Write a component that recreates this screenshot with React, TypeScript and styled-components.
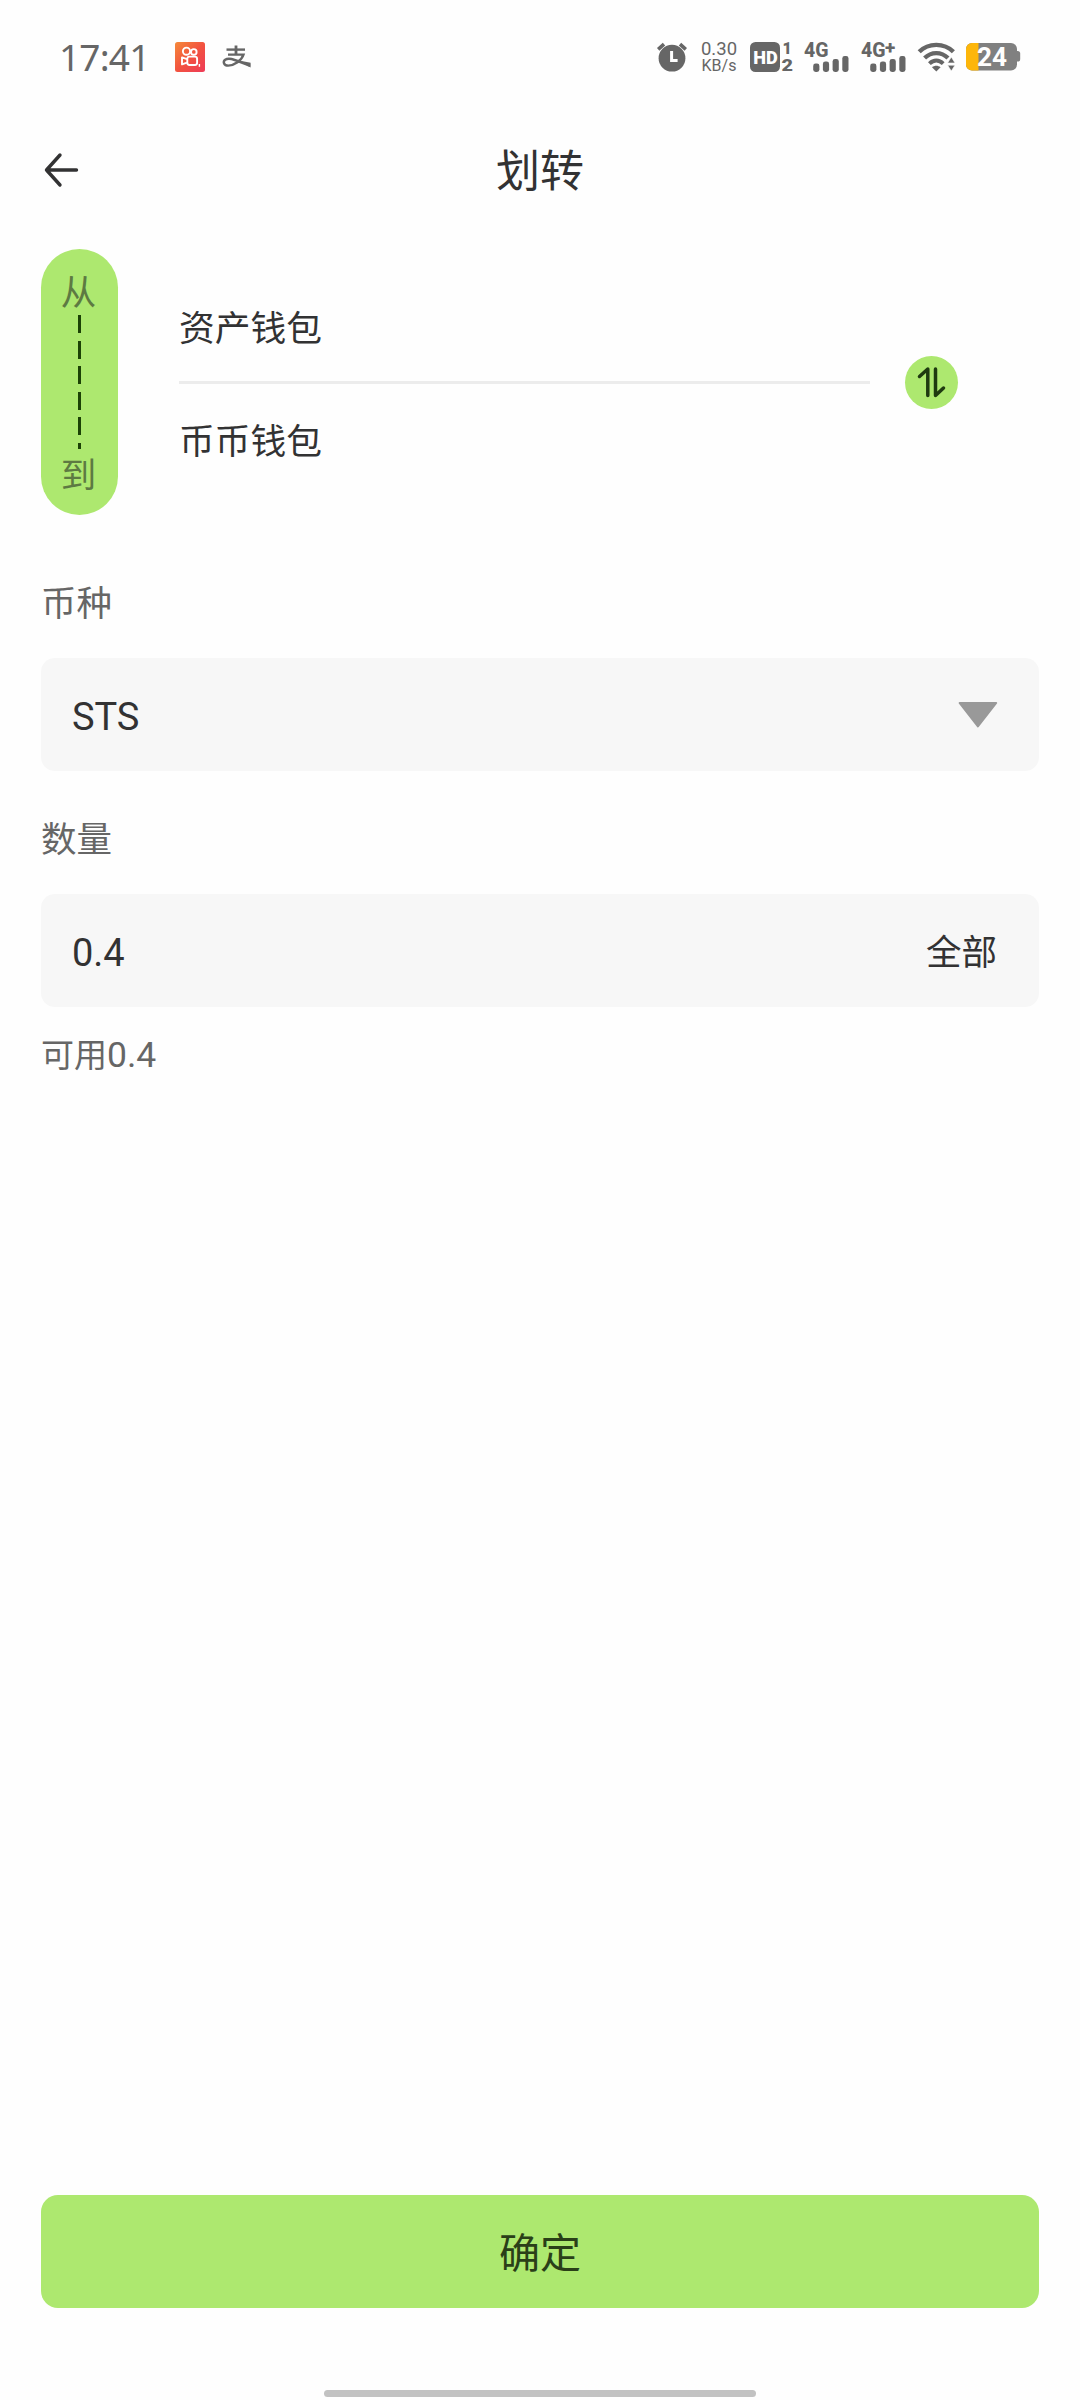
import React from 'react';
import styled, { createGlobalStyle } from 'styled-components';

const GREEN = '#ade86f';
const INK = '#323233';
const GREY = '#666666';
const STATUS = '#666666';

const GlobalStyle = createGlobalStyle`
  * { box-sizing: border-box; }
  body { margin: 0; background: #fefefe; }
  button { border: 0; padding: 0; background: none; font: inherit; color: inherit; }
`;

const Screen = styled.div`
  width: 1080px;
  height: 2400px;
  display: flex;
  flex-direction: column;
  background: #fefefe;
  color: ${INK};
  font-family: Roboto, 'Noto Sans CJK SC', sans-serif;
  overflow: hidden;
`;

const StatusBar = styled.div`
  height: 114px;
  flex: none;
  display: flex;
  justify-content: space-between;
  align-items: center;
  padding: 0 59px;
  color: ${STATUS};
`;

const StatusGroup = styled.div`
  display: flex;
  align-items: center;
`;

const Clock = styled.span`
  width: 116px;
  font: 400 37px/50px 'Noto Sans', sans-serif;
  letter-spacing: -0.8px;
`;

const Glyph = styled.svg<{ $ml?: number }>`
  display: block;
  flex: none;
  overflow: visible;
  margin-left: ${(p) => p.$ml ?? 0}px;
`;

const Speed = styled.div`
  width: 40px;
  margin-left: 12px;
  display: flex;
  flex-direction: column;
  align-items: center;
  font-family: Roboto, sans-serif;
`;

const SpeedLine = styled.span<{ $size: number; $lh: number }>`
  font-size: ${(p) => p.$size}px;
  line-height: ${(p) => p.$lh}px;
`;

const Header = styled.header`
  height: 114px;
  flex: none;
  display: grid;
  grid-template-columns: 140px 1fr 140px;
  align-items: center;
`;

const Back = styled.button`
  padding: 0 0 0 42px;
  height: 40px;
  display: flex;
  align-items: flex-start;
`;

const Title = styled.h1`
  margin: 0;
  padding-top: 2px;
  font-size: 44px;
  font-weight: 400;
  line-height: 60px;
  text-align: center;
`;

const Transfer = styled.section`
  flex: none;
  height: 266px;
  margin: 21px 41px 0;
  display: flex;
  align-items: center;
`;

const Pill = styled.div`
  width: 77px;
  height: 266px;
  border-radius: 39px;
  background: ${GREEN};
  color: #5d7a42;
  display: flex;
  flex-direction: column;
  align-items: center;
  padding: 22px 2px 0 0;
  font-size: 35.5px;
  line-height: 44px;
`;

const Dashes = styled.div`
  width: 3px;
  height: 134px;
  margin: 0 0 5px 2px;
  background: repeating-linear-gradient(to bottom, #1c4206 0 18px, transparent 18px 25.6px);
`;

const Wallets = styled.div`
  width: 691px;
  margin-left: 61px;
  padding-top: 1px;
`;

const Wallet = styled.div<{ $first?: boolean }>`
  height: ${(p) => (p.$first ? 113 : 110)}px;
  padding-bottom: 2px;
  display: flex;
  align-items: center;
  font-size: 35.75px;
  border-bottom: ${(p) => (p.$first ? '3px solid #ececec' : '0')};
`;

const Swap = styled.button`
  width: 53px;
  height: 53px;
  margin-left: 35px;
  border-radius: 50%;
  background: ${GREEN};
`;

const Form = styled.section`
  flex: 1;
  margin: 0 41px;
`;

const Label = styled.div<{ $top: number }>`
  margin-top: ${(p) => p.$top}px;
  height: 50px;
  line-height: 50px;
  font-size: 35.5px;
  color: ${GREY};
`;

const Field = styled.div<{ $top: number }>`
  margin-top: ${(p) => p.$top}px;
  height: 113px;
  padding: 0 41px 0 31px;
  border-radius: 14px;
  background: #f7f7f7;
  display: flex;
  align-items: center;
  justify-content: space-between;
  font-size: 38px;
`;

const Value = styled.span`
  padding-top: 5px;
  letter-spacing: -0.1px;
`;

const All = styled.button`
  padding: 0 1px 3px 0;
  font-size: 35.5px;
`;

const Hint = styled.div`
  margin-top: 23px;
  line-height: 50px;
  font-size: 33px;
  color: ${GREY};
`;

const Amount = styled.span`
  font-size: 35.5px;
`;

const Confirm = styled.button`
  flex: none;
  height: 113px;
  margin: 0 41px;
  padding-bottom: 3px;
  border-radius: 17px;
  background: ${GREEN};
  color: #2a3f18;
  font-size: 41px;
`;

const HomeArea = styled.footer`
  height: 92px;
  flex: none;
  display: flex;
  justify-content: center;
  align-items: flex-end;
  padding-bottom: 3px;
`;

const HomeBar = styled.div`
  width: 432px;
  height: 7px;
  border-radius: 4px;
  background: #c2c2c2;
`;

const Kuaishou = () => (
  <Glyph width="30" height="30" viewBox="0 0 30 30">
    <defs>
      <linearGradient id="ks" x1="0" y1="0" x2="1" y2="1">
        <stop offset="0" stopColor="#f58a3a" />
        <stop offset="0.5" stopColor="#f2533f" />
        <stop offset="1" stopColor="#ee3b58" />
      </linearGradient>
    </defs>
    <rect width="30" height="30" rx="2.5" fill="url(#ks)" />
    <g fill="none" stroke="#fff" strokeWidth="1.9">
      <circle cx="11.5" cy="9.2" r="3.6" />
      <circle cx="18.8" cy="9.9" r="2.8" />
      <rect x="12.3" y="14.6" width="9.8" height="8.4" rx="2.2" />
      <path d="M12 17.2 L7 15.4 V22.4 L12 20.6" strokeLinejoin="round" />
    </g>
    <path d="M24.4 22 v2.8" stroke="#fff" strokeWidth="1.4" />
  </Glyph>
);

const Alipay = () => (
  <Glyph $ml={17} width="30" height="24" viewBox="0 0 30 24" fill="none" stroke={STATUS}>
    <path d="M4.5 4.6 H23" strokeWidth="2.4" />
    <path d="M14 0.5 V9.5" strokeWidth="2.8" />
    <path d="M6 9.6 H21.5 C19.5 15.5 12.5 20.6 6.2 20.6 C1.8 20.6 0.6 16.8 3.2 14.8 C7.5 11.6 14 15.6 28 20.8" strokeWidth="2.4" />
    <path d="M17 15.4 L28.6 17.8 V22.6 Z" fill={STATUS} stroke="none" />
  </Glyph>
);

const Alarm = () => (
  <Glyph width="30" height="30" viewBox="0 0 30 30">
    <circle cx="15" cy="16.2" r="13.4" fill={STATUS} />
    <path d="M1.2 7.4 L7 2.2 M28.8 7.4 L23 2.2" stroke={STATUS} strokeWidth="3.6" />
    <path d="M14.6 9 V18.6 H20.6" fill="none" stroke="#fff" strokeWidth="3" />
  </Glyph>
);

const HdBadge = () => (
  <Glyph $ml={11} width="44" height="30" viewBox="0 0 44 30" fontFamily="Roboto, sans-serif" fontWeight="900">
    <rect width="30" height="30" rx="5.5" fill={STATUS} />
    <text x="3.2" y="21.8" fontSize="19" textLength="24.5" lengthAdjust="spacingAndGlyphs" fill="#fff">HD</text>
    <text x="32.5" y="11.6" fontSize="16" fontWeight="900" fill={STATUS}>1</text>
    <text x="31.4" y="29.4" fontSize="17" textLength="11.5" lengthAdjust="spacingAndGlyphs" fill={STATUS}>2</text>
  </Glyph>
);

const BARS = [8.5, 10.5, 13, 16];

const Signal = ({ ml, plus }: { ml: number; plus?: boolean }) => (
  <Glyph $ml={ml} width="45" height="30" viewBox="0 0 45 30" fill={STATUS} fontFamily="Roboto, sans-serif" fontWeight="800">
    <text x="0" y="14.6" fontSize="19.5" textLength="24.5" lengthAdjust="spacingAndGlyphs">4G</text>
    {plus && <text x="24" y="11.6" fontSize="19">+</text>}
    {BARS.map((h, i) => (
      <rect key={h} x={9.2 + i * 9.7} y={30 - h} width="6.2" height={h} rx="2.4" />
    ))}
  </Glyph>
);

const Wifi = () => (
  <Glyph $ml={12} width="37" height="30" viewBox="0 0 37 30" fill="none" stroke={STATUS}>
    <path d="M1.2 9.8 C10.5 0.6 26 0.6 35.4 9.8" strokeWidth="4.4" />
    <path d="M6.6 16 C13.2 9.4 23.4 9.4 30 16" strokeWidth="4.2" />
    <path d="M11.4 21.6 C15.6 17.6 21 17.6 25.2 21.6" strokeWidth="4" />
    <path d="M14 25.2 C16.6 23.2 20 23.2 22.6 25.2 L18.3 29.6 Z" fill={STATUS} stroke="none" />
    <path d="M33.3 15 L37 21 H29.6 Z M33.3 29 L37 23.2 H29.6 Z" fill={STATUS} stroke="#fefefe" strokeWidth="0.6" />
  </Glyph>
);

const Battery = () => (
  <Glyph $ml={11} width="55" height="28" viewBox="0 0 55 28">
    <defs>
      <clipPath id="cell"><rect width="51" height="27.5" rx="6" /></clipPath>
    </defs>
    <g clipPath="url(#cell)">
      <rect width="51" height="28" fill="#808080" />
      <rect width="12.5" height="28" fill="#fdb60a" />
    </g>
    <path d="M51 8 h0.6 a2.6 2.6 0 0 1 2.6 2.6 v5.4 a2.6 2.6 0 0 1 -2.6 2.6 h-0.6 z" fill="#808080" />
    <text x="11" y="23" fontFamily="Roboto, sans-serif" fontWeight="700" fontSize="25.5" textLength="30" lengthAdjust="spacingAndGlyphs" fill="#fff">24</text>
  </Glyph>
);

const App = () => (
  <>
    <GlobalStyle />
    <Screen>
      <StatusBar>
        <StatusGroup>
          <Clock>17:41</Clock>
          <Kuaishou />
          <Alipay />
        </StatusGroup>
        <StatusGroup>
          <Alarm />
          <Speed>
            <SpeedLine $size={18.5} $lh={17}>0.30</SpeedLine>
            <SpeedLine $size={16} $lh={15}>KB/s</SpeedLine>
          </Speed>
          <HdBadge />
          <Signal ml={10} />
          <Signal ml={12} plus />
          <Wifi />
          <Battery />
        </StatusGroup>
      </StatusBar>
      <Header>
        <Back aria-label="返回">
          <svg width="38" height="38" viewBox="0 0 38 38" fill="none" stroke={INK} strokeWidth="3.4" strokeLinecap="round" strokeLinejoin="round">
            <path d="M18 4 L4.5 19 L18 34 M4.5 19 H34.5" />
          </svg>
        </Back>
        <Title>划转</Title>
      </Header>
      <Transfer>
        <Pill>
          <span>从</span>
          <Dashes />
          <span>到</span>
        </Pill>
        <Wallets>
          <Wallet $first>资产钱包</Wallet>
          <Wallet>币币钱包</Wallet>
        </Wallets>
        <Swap aria-label="切换">
          <svg width="53" height="53" viewBox="0 0 53 53" fill="none" stroke="#1f3a10" strokeWidth="3.5" strokeLinecap="round" strokeLinejoin="round">
            <path d="M22.8 39.5 V13 L14.5 20.5 M30.5 13 V39.5 L38.5 32" />
          </svg>
        </Swap>
      </Transfer>
      <Form>
        <Label $top={64}>币种</Label>
        <Field $top={29}>
          <Value>STS</Value>
          <svg width="40" height="28" viewBox="0 0 40 28">
            <path d="M1.6 2 H38.2 L19.9 25.4 Z" fill="#999" stroke="#999" strokeWidth="2" strokeLinejoin="round" />
          </svg>
        </Field>
        <Label $top={44}>数量</Label>
        <Field $top={29}>
          <Value>0.4</Value>
          <All>全部</All>
        </Field>
        <Hint>可用<Amount>0.4</Amount></Hint>
      </Form>
      <Confirm>确定</Confirm>
      <HomeArea><HomeBar /></HomeArea>
    </Screen>
  </>
);

export default App;
